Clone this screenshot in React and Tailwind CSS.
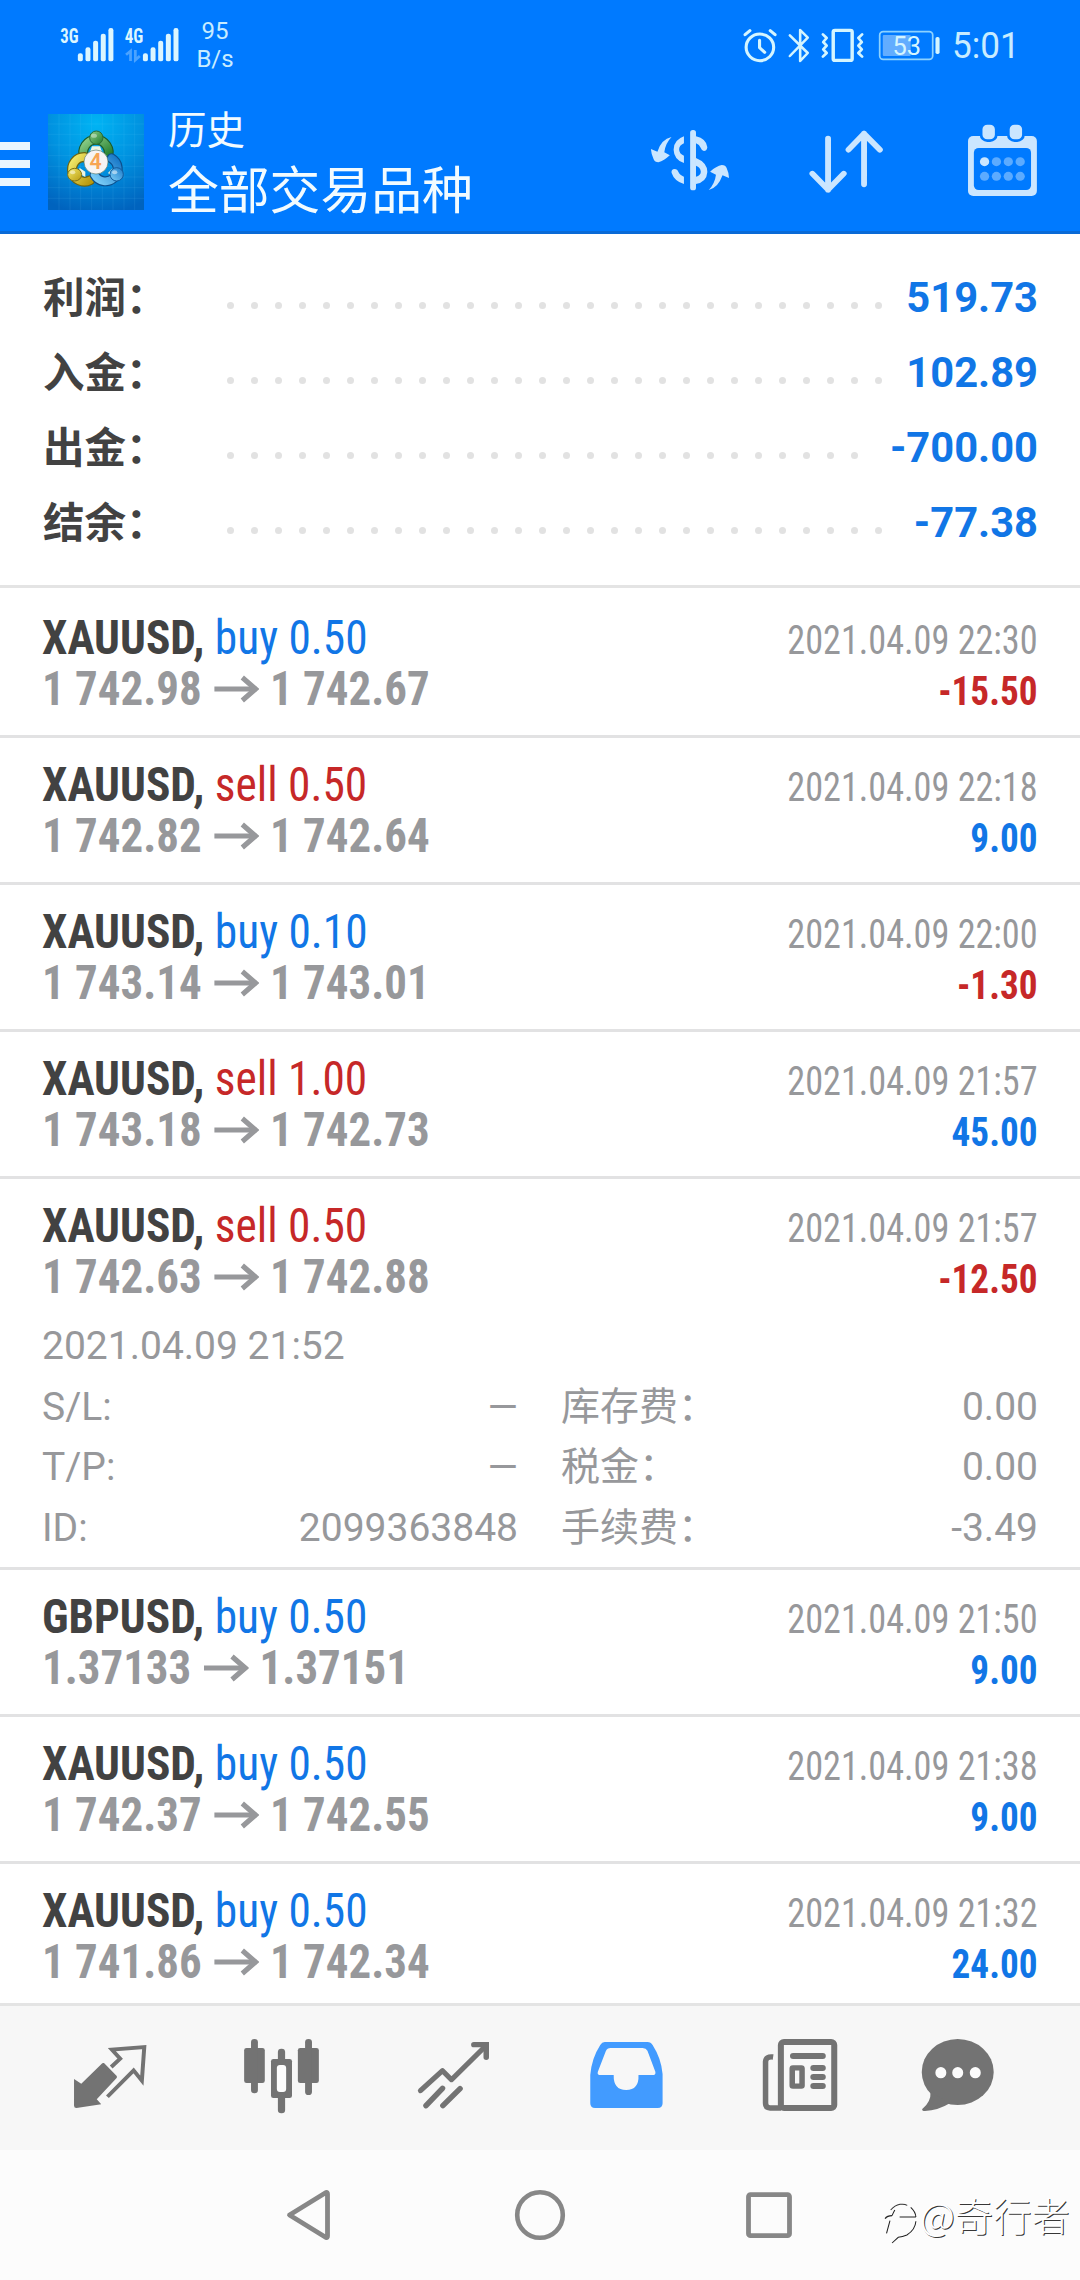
import React from 'react';

const SANS = "font-['Roboto','Noto_Sans_CJK_SC',sans-serif]";
const COND = "font-['Roboto_Condensed','Noto_Sans_CJK_SC',sans-serif]";

function Icon({ vb, className, children }) {
  return (
    <svg viewBox={vb} preserveAspectRatio="none" className={className} fill="none">
      {children}
    </svg>
  );
}

function SignalBars({ x }) {
  return [160, 142, 122, 101, 84].map((y, i) => (
    <rect key={y} x={x + i * 22.2} y={y} width="14.5" height={184 - y} rx="6.5" fill="#dcf6ff" />
  ));
}

function StatusBar() {
  return (
    <div className="flex h-[78px] items-start text-[#c8f0ff]">
      <Icon vb="174.2 60 348.5 150" className="ml-[60px] mt-[20px] h-[50px] w-[120px]">
        <g fill="#dcf6ff" fontSize="62" fontWeight="700" className={COND}>
          <text x="175" y="128" textLength="53" lengthAdjust="spacingAndGlyphs">3G</text>
          <text x="362" y="128" textLength="54" lengthAdjust="spacingAndGlyphs">4G</text>
        </g>
        <SignalBars x={226} />
        <SignalBars x={415} />
        <path d="M379 183 V153 L366 164 M393 150 V180 L406 168" stroke="#4ba3ff" strokeWidth="8" />
      </Icon>
      <div className={`ml-[15px] mt-[17px] w-[40px] text-center text-[24px] leading-[28px] text-[#c8ecff] ${SANS}`}>
        <div>95</div>
        <div>B/s</div>
      </div>
      <div className="ml-auto flex">
        <Icon vb="588 60 581 150" className="mt-[20px] h-[50px] w-[200px]">
          <g stroke="#d4f5ff" strokeLinecap="round" strokeLinejoin="round">
            <circle cx="640" cy="142" r="40" strokeWidth="9" />
            <path d="M639 121 V143 L654 157" strokeWidth="9" />
            <path d="M597 104 L611 92 M670 92 L684 104" strokeWidth="9" />
            <path d="M727 106 L779 159 L757 183 V90 L779 113 L727 168" strokeWidth="7.5" />
            <rect x="853" y="91" width="55" height="90" rx="5" strokeWidth="10" />
            <path d="M823 103 L834 114 L824 126 L834 137 L824 148 L834 159 L823 170 M937 103 L926 114 L936 126 L926 137 L936 148 L926 159 L937 170" strokeWidth="8" />
          </g>
          <rect x="997" y="105" width="81" height="63" rx="3" fill="#62adff" />
          <rect x="988" y="95" width="154" height="83" rx="10" stroke="#8cd2ff" strokeWidth="5" />
          <rect x="1150" y="111" width="12" height="51" rx="5" fill="#d4f5ff" />
          <text x="1025" y="164" fontSize="79" fill="#d4f5ff" textLength="83" lengthAdjust="spacingAndGlyphs" className={SANS}>53</text>
        </Icon>
        <div className={`ml-[10px] mr-[61px] mt-[22px] w-[67px] origin-left scale-x-[0.95] text-[37px] leading-[48px] text-[#c8ecff] ${SANS}`}>5:01</div>
      </div>
    </div>
  );
}

function AppLogo() {
  return (
    <Icon vb="24 27 288 288" className="mt-[36px] h-[96px] w-[96px]">
      <defs>
        <radialGradient id="sky" cx="0.5" cy="0.1" r="0.95">
          <stop offset="0" stopColor="#00b4f4" />
          <stop offset="0.5" stopColor="#0092e0" />
          <stop offset="1" stopColor="#0063be" />
        </radialGradient>
        <linearGradient id="green" x1="0" y1="0" x2="1" y2="1">
          <stop offset="0" stopColor="#8fd08a" />
          <stop offset="1" stopColor="#1f7a2a" />
        </linearGradient>
        <linearGradient id="gold" x1="0" y1="0" x2="1" y2="1">
          <stop offset="0" stopColor="#f4ec6c" />
          <stop offset="1" stopColor="#b99a10" />
        </linearGradient>
        <linearGradient id="blue" x1="0" y1="1" x2="1" y2="0">
          <stop offset="0" stopColor="#7fd0f8" />
          <stop offset="1" stopColor="#1878c8" />
        </linearGradient>
      </defs>
      <rect x="24" y="27" width="288" height="288" fill="url(#sky)" />
      <path
        d="M57 27 V315 M90 27 V315 M122 27 V315 M155 27 V315 M187 27 V315 M219 27 V315 M252 27 V315 M284 27 V315 M24 57 H312 M24 88 H312 M24 120 H312 M24 152 H312 M24 184 H312 M24 216 H312 M24 248 H312 M24 280 H312"
        stroke="#6fd0ff"
        strokeOpacity="0.16"
        strokeWidth="2"
      />
      <g strokeLinecap="round">
        <path d="M133 157 A38 38 0 1 1 203 157" stroke="#1c5c2c" strokeWidth="30" />
        <path d="M133 157 A38 38 0 1 1 203 157" stroke="url(#green)" strokeWidth="23" />
        <path d="M150 226 A37 37 0 1 1 133 156" stroke="#6d6410" strokeWidth="30" />
        <path d="M150 226 A37 37 0 1 1 133 156" stroke="url(#gold)" strokeWidth="23" />
        <path d="M215 160 A37 37 0 1 1 164 210" stroke="#0c4f8c" strokeWidth="30" />
        <path d="M215 160 A37 37 0 1 1 164 210" stroke="url(#blue)" strokeWidth="23" />
      </g>
      <path d="M156 124 L180 124 L186 140 H150Z M118 188 L136 200 V216 L118 206Z M218 190 L204 204 L214 212Z" fill="#eef6e0" />
      <ellipse cx="169" cy="98" rx="20" ry="20" fill="url(#green)" stroke="#2a6b35" strokeWidth="3" />
      <ellipse cx="104" cy="209" rx="21" ry="19" fill="url(#gold)" stroke="#7d7016" strokeWidth="3" />
      <ellipse cx="230" cy="208" rx="20" ry="20" fill="url(#blue)" stroke="#135a9c" strokeWidth="3" />
      <ellipse cx="162" cy="92" rx="9" ry="6" fill="#fff" fillOpacity="0.4" />
      <ellipse cx="98" cy="202" rx="8" ry="6" fill="#fff" fillOpacity="0.5" />
      <ellipse cx="224" cy="202" rx="8" ry="6" fill="#fff" fillOpacity="0.5" />
      <circle cx="168" cy="171" r="36" fill="#f6f4f3" stroke="#5c7d70" strokeWidth="2" />
      <text x="167" y="193" fontSize="64" fontWeight="600" fill="#f7a552" textAnchor="middle" className={SANS}>4</text>
    </Icon>
  );
}

function Header() {
  return (
    <div className="flex h-[156px] items-start border-b-[3px] border-[#0a6ad6]">
      <div className="mt-[64px] flex w-[30px] flex-col gap-[10px]">
        <div className="h-[8px] bg-[#eaf6ff]" />
        <div className="h-[8px] bg-[#eaf6ff]" />
        <div className="h-[8px] bg-[#eaf6ff]" />
      </div>
      <div className="ml-[18px]">
        <AppLogo />
      </div>
      <div className="ml-[24px] mt-[19px] font-['Noto_Sans_CJK_SC',sans-serif] leading-[60px] text-[#f2fbff]">
        <div className="text-[38.5px]">历史</div>
        <div className="text-[50.8px] font-normal">全部交易品种</div>
      </div>
      <div className="ml-auto mr-[25px] flex">
        <Icon vb="290.4 330 290.4 300" className="mt-[32px] h-[100px] w-[100px]">
          <g fill="#cbe6ff">
            <rect x="436" y="390" width="17" height="181" rx="8" />
            <path d="M418 409 Q388 420 388 449 Q389 479 418 489 V467 Q404 462 404 448 Q404 436 418 430Z" />
            <path d="M418 552 Q390 543 382 518 Q381 507 391 507 Q399 507 402 516 Q406 526 418 530Z" />
            <path d="M453 409 Q483 416 486 442 Q485 453 476 453 Q470 453 467 444 Q463 434 453 430Z" />
            <path d="M453 474 Q486 488 486 516 Q484 546 453 552 V530 Q467 526 467 515 Q466 502 453 497Z" />
            <path d="M382 411 Q364 430 361 457 L377 466 Q360 482 344 487 Q333 487 330 478 Q323 462 322 447 L341 455 Q352 418 382 411Z" />
            <path d="M490 570 Q508 550 511 524 L494 515 Q512 498 528 495 Q539 495 542 504 Q549 520 549 534 L530 526 Q517 564 490 570Z" />
          </g>
        </Icon>
        <Icon vb="743.4 330 290.4 300" className="ml-[56px] mt-[32px] h-[100px] w-[100px]">
          <path
            d="M836.5 416 V569 M791 521 L836.5 569 L882 521 M941 553 V401 M896 449 L941 401 L987 449"
            stroke="#cbe6ff"
            strokeWidth="17"
            strokeLinecap="round"
            strokeLinejoin="round"
          />
        </Icon>
        <Icon vb="1205.2 330 290.4 300" className="ml-[59px] mt-[32px] h-[100px] w-[100px]">
          <rect x="1243" y="408" width="200" height="180" rx="15" fill="#cbe6ff" />
          <rect x="1260" y="444" width="166" height="126" rx="14" fill="#007aff" />
          <rect x="1281" y="370" width="44" height="52" rx="18" fill="#cbe6ff" stroke="#007aff" strokeWidth="8" />
          <rect x="1360" y="370" width="44" height="52" rx="18" fill="#cbe6ff" stroke="#007aff" strokeWidth="8" />
          {[485, 529].map((y) =>
            [1291, 1325.5, 1360, 1394.5].map((x) => (
              <circle key={`${x}-${y}`} cx={x} cy={y} r="13.5" fill={x === 1291 && y === 485 ? '#cbe6ff' : '#5cabff'} />
            ))
          )}
        </Icon>
      </div>
    </div>
  );
}

const SUMMARY = [
  { label: '利润', value: '519.73', dots: 28 },
  { label: '入金', value: '102.89', dots: 28 },
  { label: '出金', value: '-700.00', dots: 27 },
  { label: '结余', value: '-77.38', dots: 28 },
];

function Summary() {
  return (
    <div className={`h-[354px] border-b-[3px] border-[#e4e4e4] pl-[43px] pr-[42px] pt-[26px] text-[42px] font-bold leading-[75px] ${SANS}`}>
      {SUMMARY.map((s) => (
        <div key={s.label} className="flex h-[75px]">
          <div className="w-[184px] pt-px text-[41.5px] text-[#424242]">{s.label}：</div>
          <div className="flex gap-[17px] pt-[42px]">
            {Array.from({ length: s.dots }, (_, i) => (
              <span key={i} className="h-[7px] w-[7px] rounded-full bg-[#e2e2e2]" />
            ))}
          </div>
          <div className="ml-auto text-[41.7px] text-[#1176e6]">{s.value}</div>
        </div>
      ))}
    </div>
  );
}

const TRADES = [
  { sym: 'XAUUSD', side: 'buy', vol: '0.50', from: '1 742.98', to: '1 742.67', time: '2021.04.09 22:30', profit: '-15.50' },
  { sym: 'XAUUSD', side: 'sell', vol: '0.50', from: '1 742.82', to: '1 742.64', time: '2021.04.09 22:18', profit: '9.00' },
  { sym: 'XAUUSD', side: 'buy', vol: '0.10', from: '1 743.14', to: '1 743.01', time: '2021.04.09 22:00', profit: '-1.30' },
  { sym: 'XAUUSD', side: 'sell', vol: '1.00', from: '1 743.18', to: '1 742.73', time: '2021.04.09 21:57', profit: '45.00' },
  {
    sym: 'XAUUSD', side: 'sell', vol: '0.50', from: '1 742.63', to: '1 742.88', time: '2021.04.09 21:57', profit: '-12.50',
    details: {
      opened: '2021.04.09 21:52',
      rows: [
        ['S/L:', '—', '库存费：', '0.00'],
        ['T/P:', '—', '税金：', '0.00'],
        ['ID:', '2099363848', '手续费：', '-3.49'],
      ],
    },
  },
  { sym: 'GBPUSD', side: 'buy', vol: '0.50', from: '1.37133', to: '1.37151', time: '2021.04.09 21:50', profit: '9.00' },
  { sym: 'XAUUSD', side: 'buy', vol: '0.50', from: '1 742.37', to: '1 742.55', time: '2021.04.09 21:38', profit: '9.00' },
  { sym: 'XAUUSD', side: 'buy', vol: '0.50', from: '1 741.86', to: '1 742.34', time: '2021.04.09 21:32', profit: '24.00' },
];

function Details({ opened, rows }) {
  return (
    <div className={`mb-[-13px] mt-[14px] text-[39px] leading-[60.7px] text-[#97989b] ${SANS}`}>
      <div>{opened}</div>
      {rows.map(([a, b, c, d]) => (
        <div key={a} className="flex">
          <div className="flex w-[476px] justify-between">
            <span>{a}</span>
            <span>{b}</span>
          </div>
          <div className="ml-[43px] flex flex-1 justify-between">
            <span>{c}</span>
            <span>{d}</span>
          </div>
        </div>
      ))}
    </div>
  );
}

function Trade({ t }) {
  return (
    <div className="border-b-[3px] border-[#e2e2e3] pb-[21px] pl-[42px] pr-[42px] pt-[21px] last:border-b-0">
      <div className={`flex h-[102px] justify-between whitespace-pre leading-[51px] ${COND}`}>
        <div className="text-[48px]">
          <div className="origin-left scale-x-[0.945]">
            <span className="font-bold text-[#424242]">{t.sym}, </span>
            <span className={t.side === 'buy' ? 'text-[#1176e6]' : 'text-[#c62828]'}>
              {t.side} {t.vol}
            </span>
          </div>
          <div className="flex origin-left scale-x-[0.936] font-bold text-[#97989b]">
            <span>{t.from}</span>
            <svg viewBox="0 0 48 51" preserveAspectRatio="none" className="ml-[13px] mr-[12px] h-[51px] w-[48px]" fill="none">
              <path d="M0 26 H45" stroke="#97989b" strokeWidth="5" />
              <path d="M30 14.5 L44 26 L30 37.5" stroke="#97989b" strokeWidth="5.5" />
            </svg>
            <span>{t.to}</span>
          </div>
        </div>
        <div className="pt-[3px] text-right text-[40px]">
          <div className="origin-right scale-x-[0.905] text-[#97989b]">{t.time}</div>
          <div className={`origin-right scale-x-[0.93] font-bold ${t.profit[0] === '-' ? 'text-[#c62828]' : 'text-[#1176e6]'}`}>{t.profit}</div>
        </div>
      </div>
      {t.details && <Details {...t.details} />}
    </div>
  );
}

function TabBar() {
  const cell = 'h-[144px] w-[172px]';
  return (
    <div className="flex h-[147px] border-t-[3px] border-[#e4e4e4] bg-[#f7f7f7] pl-[24px]">
      <Icon vb="69.7 78 499.5 432" className={cell}>
        <path d="M302 249 L339 288 Q341 292 338 295 L281 358 L294 373 L222 384 Q215 384 215 377 L215 297 L236 311 L297 250 Q300 248 302 249Z" fill="#737373" />
        <path d="M327 257 L349 236 L325 209 L419 201 L412 302 L388 271 L316 346" stroke="#737373" strokeWidth="11.5" strokeLinejoin="miter" strokeLinecap="square" />
      </Icon>
      <Icon vb="569.2 78 499.5 432" className={cell}>
        <g fill="#737373">
          <rect x="709" y="204" width="60" height="105" rx="7" />
          <rect x="729" y="177" width="20" height="163" rx="10" />
          <rect x="865" y="204" width="61" height="105" rx="7" />
          <rect x="886" y="177" width="20" height="168" rx="10" />
          <rect x="787" y="237" width="61" height="117" rx="7" />
          <rect x="807" y="206" width="21" height="194" rx="10" />
        </g>
        <rect x="804" y="255" width="27" height="81" rx="9" fill="#fcfcfc" />
      </Icon>
      <Icon vb="1068.6 78 499.5 432" className={cell}>
        <g stroke="#737373" strokeLinecap="round">
          <path d="M1221 332 L1285 272 L1311 299 L1408 200" strokeWidth="15" strokeLinejoin="round" />
          <path d="M1376 194 H1412 V232" strokeWidth="16" strokeLinejoin="miter" />
          <path d="M1237 377 L1285 325 M1286 377 L1336 326" strokeWidth="16" />
        </g>
      </Icon>
      <Icon vb="0 78 499.5 432" className={cell}>
        <path fillRule="evenodd" d="M188 186 H312 Q322 186 327 195 Q352 235 356 282 V370 Q356 384 342 384 H160 Q146 384 146 370 V285 Q150 235 175 195 Q180 186 188 186Z M205 204 H298 Q308 204 312 212 L335 275 Q337 285 327 285 H286 Q288 330 250 330 Q213 330 214 285 H176 Q165 285 168 275 L191 214 Q195 204 205 204Z" fill="#429bff" />
      </Icon>
      <Icon vb="499.5 78 499.5 432" className={cell}>
        <g stroke="#737373" strokeLinecap="round">
          <rect x="699.5" y="186" width="155" height="198" rx="9" strokeWidth="17.5" />
          <path d="M677 231 Q656 228 655 245 V370 Q655 384 668 384 H700" strokeWidth="16" strokeLinecap="butt" />
          <path d="M735 228 H821 M794 264 H821 M794 291 H821 M794 318 H821" strokeWidth="18" />
        </g>
        <rect x="732.5" y="263.5" width="28.5" height="55" rx="2" stroke="#737373" strokeWidth="16" />
      </Icon>
      <Icon vb="998.9 78 499.5 432" className={cell}>
        <ellipse cx="1213" cy="276" rx="104.5" ry="99" fill="#737373" />
        <path d="M1134 335 Q1136 365 1110 387 Q1108 393 1118 393 Q1155 392 1190 370Z" fill="#737373" />
        <ellipse cx="1164" cy="278" rx="16" ry="17" fill="#fcfcfc" />
        <ellipse cx="1213" cy="278" rx="16" ry="17" fill="#fcfcfc" />
        <ellipse cx="1264" cy="278" rx="16" ry="17" fill="#fcfcfc" />
      </Icon>
    </div>
  );
}

function SystemNav() {
  return (
    <div className="flex h-[130px] bg-[#fcfcfc]">
      <svg viewBox="258 2150 100 130" className="ml-[258px] h-[130px] w-[100px]" fill="none">
        <path d="M289.5 2215 L326 2192.5 Q327.5 2192 327.5 2194 V2236 Q327.5 2238 326 2237.5Z" stroke="#878787" strokeWidth="4.8" strokeLinejoin="round" />
      </svg>
      <svg viewBox="490 2150 100 130" className="ml-[132px] h-[130px] w-[100px]" fill="none">
        <circle cx="540" cy="2215" r="22.8" stroke="#878787" strokeWidth="4.6" />
      </svg>
      <svg viewBox="719 2150 100 130" className="ml-[129px] h-[130px] w-[100px]" fill="none">
        <rect x="748.5" y="2194.7" width="41" height="41" rx="2" stroke="#878787" strokeWidth="4.8" />
      </svg>
      <div className="ml-[62px] flex">
        <svg viewBox="990 510 110 390" preserveAspectRatio="none" className="h-[130px] w-[38px]" fill="none">
          <path d="M1018 690 Q1030 676 1045 673 Q1058 671 1066 676" stroke="#333" strokeWidth="3" />
          <path d="M1002 716 Q1008 707 1022 707" stroke="#222" strokeWidth="4" />
          <path d="M1022 707 Q1026 697 1030 690 M1016 722 L1006 760 M1044 711 H1091 M1076 682 Q1090 695 1091 711 M1091 724 Q1089 750 1065 765 Q1052 771 1040 772 L1022 789" stroke="#222" strokeWidth="3" />
        </svg>
        <div className="ml-px mt-[39px] whitespace-nowrap font-['Noto_Sans_CJK_SC',sans-serif] text-[38.3px] font-light leading-[52px] text-white [text-shadow:1px_1px_0.5px_rgba(0,0,0,0.8)]">@奇行者</div>
      </div>
    </div>
  );
}

export default function App() {
  return (
    <div className="flex h-[2280px] w-[1080px] flex-col overflow-hidden bg-white">
      <div className="bg-[#007aff]">
        <StatusBar />
        <Header />
      </div>
      <Summary />
      <div className="h-[1415px] overflow-hidden pt-[3px]">
        {TRADES.map((t) => (
          <Trade key={t.time + t.profit} t={t} />
        ))}
      </div>
      <TabBar />
      <SystemNav />
    </div>
  );
}
